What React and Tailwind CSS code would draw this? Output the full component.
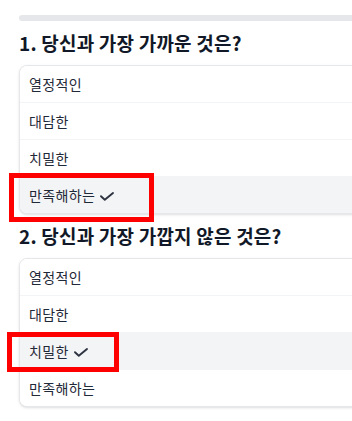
import React from "react";

const Check = () => (
  <svg width="14" height="9" viewBox="0 0 14 9" fill="none" stroke="#2d3340" strokeWidth="1.9" strokeLinecap="round" strokeLinejoin="round" className="inline-block ml-[5px] mt-[2px]">
    <path d="M1 4.2 4.8 7.8 13 1" />
  </svg>
);

function Question({ title, options, selected }) {
  return (
    <div>
      <h2 className="text-[19px] tracking-[0.2px] font-bold leading-7 text-[#111827] mb-2">{title}</h2>
      <div className="border border-gray-200 rounded-lg shadow-sm overflow-hidden bg-white">
        {options.map((o, i) => (
          <div
            key={o}
            className={
              (i === selected ? "bg-gray-100 " : "bg-white ") +
              (i < options.length - 1 ? "border-b border-gray-100 " : "") +
              "px-[9px] py-2 text-[14px] tracking-[0.4px] leading-5 text-[#1f2937] flex items-center"
            }
          >
            <span>{o}</span>
            {i === selected && <Check />}
          </div>
        ))}
      </div>
    </div>
  );
}

export default function App() {
  const opts = ["열정적인", "대담한", "치밀한", "만족해하는"];
  return (
    <div
      className="relative w-[352px] h-[421px] overflow-hidden bg-white"
      style={{ fontFamily: '"Noto Sans CJK KR", "Liberation Sans", sans-serif' }}
    >
      <div className="w-[400px] pl-[19px] pt-[15px]">
        <div className="h-1.5 rounded-full bg-gray-200 mb-2" />
        <div className="flex flex-col gap-2">
          <Question title="1. 당신과 가장 가까운 것은?" options={opts} selected={3} />
          <Question title="2. 당신과 가장 가깝지 않은 것은?" options={opts} selected={2} />
        </div>
      </div>
      <div className="absolute left-[9px] top-[173px] w-[145px] h-[49px] border-[5px] border-[#ff0000]" />
      <div className="absolute left-[7px] top-[332px] w-[112px] h-[40px] border-[5px] border-[#ff0000]" />
    </div>
  );
}
